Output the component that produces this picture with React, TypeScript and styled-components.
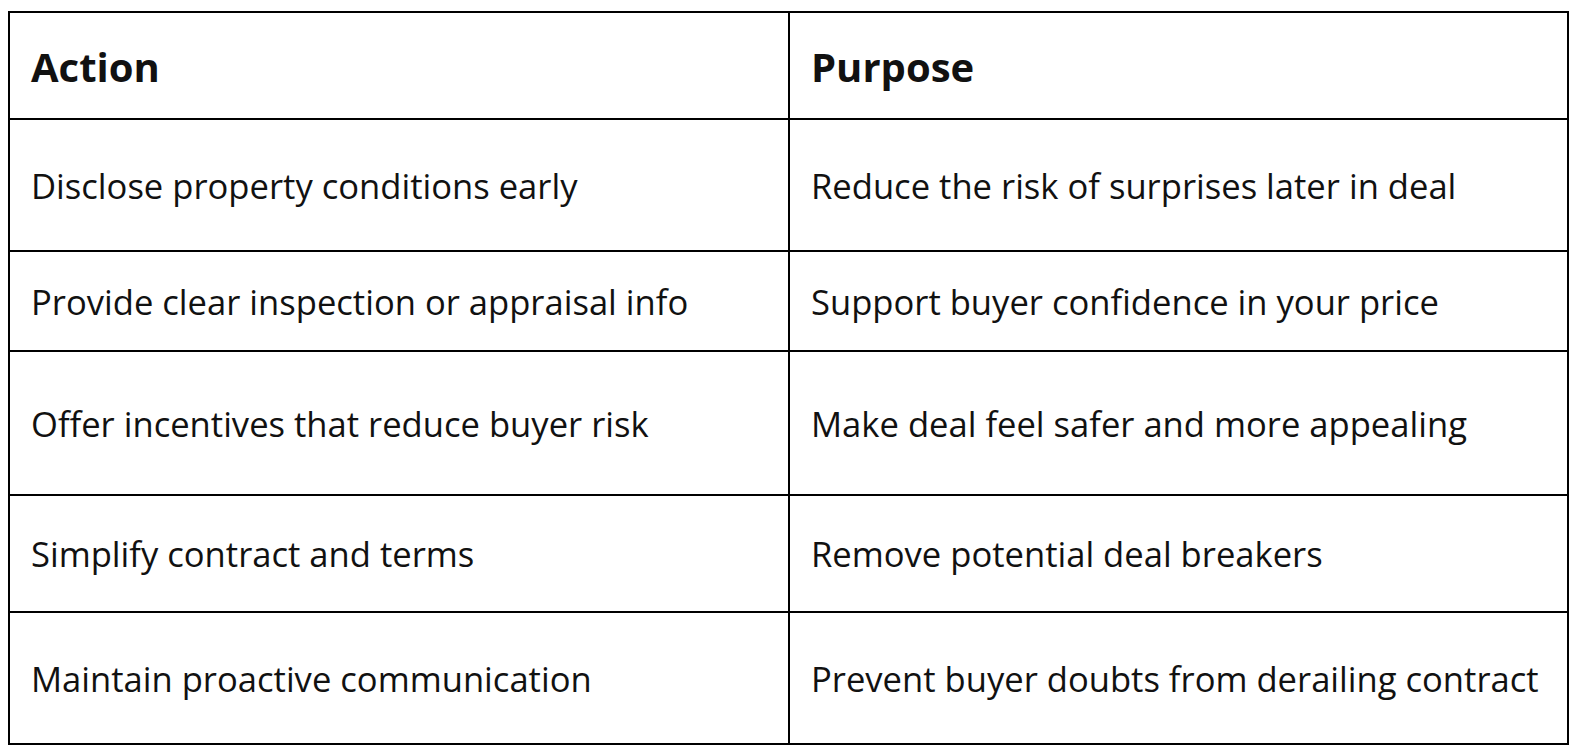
import React from 'react'
import styled, { createGlobalStyle } from 'styled-components'

const GlobalStyle = createGlobalStyle`
  html, body {
    margin: 0;
    padding: 0;
    background: #ffffff;
  }
  body {
    font-family: "Open Sans", "Noto Sans", sans-serif;
    color: #111111;
  }
`

const Page = styled.main`
  width: 1579px;
  height: 754px;
  padding: 11px 0 0 8px;
  box-sizing: border-box;
`

const Table = styled.div`
  width: 1561px;
  display: grid;
  grid-template-columns: 780px 1fr;
  border: 2px solid #000000;
  box-sizing: border-box;
`

const Cell = styled.div<{ $h: number; $head?: boolean; $last?: boolean }>`
  height: ${(p) => p.$h}px;
  display: flex;
  align-items: center;
  padding: ${(p) => (p.$head ? '2px 0 0 21px' : '0 0 0 21px')};
  box-sizing: border-box;
  border-bottom: ${(p) => (p.$last ? 'none' : '2px solid #000000')};
  font-size: ${(p) => (p.$head ? '40px' : '34.6px')};
  font-weight: ${(p) => (p.$head ? 700 : 400)};
  white-space: nowrap;

  &:nth-child(odd) {
    border-right: 2px solid #000000;
  }
`

const rows: [string, string, number][] = [
  ['Disclose property conditions early', 'Reduce the risk of surprises later in deal', 132],
  ['Provide clear inspection or appraisal info', 'Support buyer confidence in your price', 100],
  ['Offer incentives that reduce buyer risk', 'Make deal feel safer and more appealing', 144],
  ['Simplify contract and terms', 'Remove potential deal breakers', 117],
  ['Maintain proactive communication', 'Prevent buyer doubts from derailing contract', 130],
]

export default () => {
  return (
    <Page>
      <GlobalStyle />
      <Table>
        <Cell $h={107} $head>Action</Cell>
        <Cell $h={107} $head>Purpose</Cell>
        {rows.map(([action, purpose, h], i) => (
          <React.Fragment key={action}>
            <Cell $h={h} $last={i === rows.length - 1}>{action}</Cell>
            <Cell $h={h} $last={i === rows.length - 1}>{purpose}</Cell>
          </React.Fragment>
        ))}
      </Table>
    </Page>
  )
}
